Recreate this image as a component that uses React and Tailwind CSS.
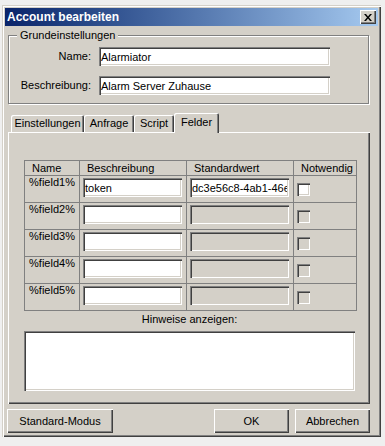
const raised = 'shadow-[inset_1px_1px_0_#ffffff,inset_-1px_-1px_0_#404040,inset_-2px_-2px_0_#808080]';
const sunken = 'shadow-[inset_1px_1px_0_#808080,inset_2px_2px_0_#404040,inset_-1px_-1px_0_#ffffff,inset_-2px_-2px_0_#d4d0c8]';

const fields = [
  { name: '%field1%', desc: 'token', def: 'dc3e56c8-4ab1-46ec-9f2a', enabled: true },
  { name: '%field2%', desc: '', def: '', enabled: false },
  { name: '%field3%', desc: '', def: '', enabled: false },
  { name: '%field4%', desc: '', def: '', enabled: false },
  { name: '%field5%', desc: '', def: '', enabled: false },
];

function TextBox({ value, width, disabled }) {
  return (
    <input
      readOnly
      value={value}
      className={`h-[19px] px-[2px] text-[11px] text-black outline-none ${sunken} ${
        disabled ? 'bg-[#d4d0c8]' : 'bg-white'
      } ${width}`}
    />
  );
}

function CheckBox({ disabled }) {
  return <div className={`w-[13px] h-[13px] ${sunken} ${disabled ? 'bg-[#d4d0c8]' : 'bg-white'}`} />;
}

function Tab({ label, width, selected }) {
  if (selected) {
    return (
      <div
        className={`${width} h-[20px] -mb-[1px] relative z-10 bg-[#d4d0c8] rounded-t-[2px] flex items-center justify-center pb-[2px] shadow-[inset_1px_1px_0_#ffffff,inset_-1px_0_0_#404040,inset_-2px_0_0_#808080]`}
      >
        {label}
      </div>
    );
  }
  return (
    <div
      className={`${width} h-[17px] bg-[#d4d0c8] rounded-t-[2px] flex items-center justify-center shadow-[inset_1px_1px_0_#ffffff,inset_-1px_0_0_#404040,inset_-2px_0_0_#808080]`}
    >
      {label}
    </div>
  );
}

function Button({ children, className }) {
  return (
    <div className={`h-[24px] bg-[#d4d0c8] flex items-center justify-center text-[11px] ${raised} ${className}`}>
      {children}
    </div>
  );
}

export default function App() {
  return (
    <div className="w-[385px] h-[446px] bg-[#efefef] pt-[5px] pl-[2px] overflow-hidden font-['Liberation_Sans',Arial,sans-serif] text-[11px] text-black">
      <div className="w-[379px] h-[432px] bg-[#d4d0c8] p-[3px] flex flex-col shadow-[inset_1px_1px_0_#d4d0c8,inset_2px_2px_0_#ffffff,inset_-1px_-1px_0_#404040,inset_-2px_-2px_0_#808080]">
        {/* title bar */}
        <div className="h-[18px] flex items-center justify-between pl-[2px] pr-[2px] bg-linear-to-r from-[#0a246a] to-[#a6caf0]">
          <span className="text-white font-bold text-[12px] leading-[18px]">Account bearbeiten</span>
          <div className={`w-[16px] h-[14px] bg-[#d4d0c8] flex items-center justify-center ${raised}`}>
            <svg width="8" height="7" viewBox="0 0 8 7">
              <path d="M0 0h2l2 2.5L6 0h2L5 3.5 8 7H6L4 4.5 2 7H0l3-3.5z" fill="#000" />
            </svg>
          </div>
        </div>

        {/* Grundeinstellungen */}
        <fieldset className="mt-[3px] ml-[3px] w-[361px] border border-[#808080] pb-[8px] shadow-[inset_1px_1px_0_#ffffff,1px_1px_0_#ffffff]">
          <legend className="ml-[8px] px-[3px] bg-[#d4d0c8] text-[11px] leading-[13px]">Grundeinstellungen</legend>
          <div className="pt-[5px] flex flex-col gap-[10px]">
            <div className="flex items-center">
              <span className="w-[82px] text-right">Name:</span>
              <div className="ml-[8px]">
                <TextBox value="Alarmiator" width="w-[231px]" />
              </div>
            </div>
            <div className="flex items-center">
              <span className="w-[82px] text-right">Beschreibung:</span>
              <div className="ml-[8px]">
                <TextBox value="Alarm Server Zuhause" width="w-[231px]" />
              </div>
            </div>
          </div>
        </fieldset>

        {/* tabs */}
        <div className="mt-[9px] ml-[6px] h-[19px] flex items-end">
          <Tab label="Einstellungen" width="w-[73px]" />
          <Tab label="Anfrage" width="w-[50px]" />
          <Tab label="Script" width="w-[40px]" />
          <Tab label="Felder" width="w-[45px]" selected />
        </div>

        <div className={`ml-[3px] w-[362px] h-[272px] pt-[28px] pl-[16px] ${raised}`}>
          <div className="w-[333px] grid grid-cols-[55px_107px_107px_63px] border-l border-t border-[#808080]">
            {['Name', 'Beschreibung', 'Standardwert', 'Notwendig'].map((h) => (
              <div key={h} className="h-[15px] pl-[7px] leading-[14px] border-r border-b border-[#808080]">
                {h}
              </div>
            ))}
            {fields.map((f) => (
              <div key={f.name} className="contents">
                <div className="h-[27px] text-center leading-[13px] border-r border-b border-[#808080]">{f.name}</div>
                <div className="h-[27px] pl-[3px] pt-[2px] border-r border-b border-[#808080]">
                  <TextBox value={f.desc} width="w-[99px]" />
                </div>
                <div className="h-[27px] pl-[3px] pt-[2px] border-r border-b border-[#808080]">
                  <TextBox value={f.def} width="w-[99px]" disabled={!f.enabled} />
                </div>
                <div className="h-[27px] pl-[3px] pt-[7px] border-r border-b border-[#808080]">
                  <CheckBox disabled={!f.enabled} />
                </div>
              </div>
            ))}
          </div>
          <div className="w-[331px] mt-[2px] text-center leading-[13px]">Hinweise anzeigen:</div>
          <div className={`w-[331px] h-[60px] mt-[5px] bg-white ${sunken}`} />
        </div>

        {/* buttons */}
        <div className="mt-[5px] flex">
          <Button className="ml-[2px] w-[106px]">Standard-Modus</Button>
          <Button className="ml-[101px] w-[75px]">OK</Button>
          <Button className="ml-[6px] w-[75px]">Abbrechen</Button>
        </div>
      </div>
    </div>
  );
}
